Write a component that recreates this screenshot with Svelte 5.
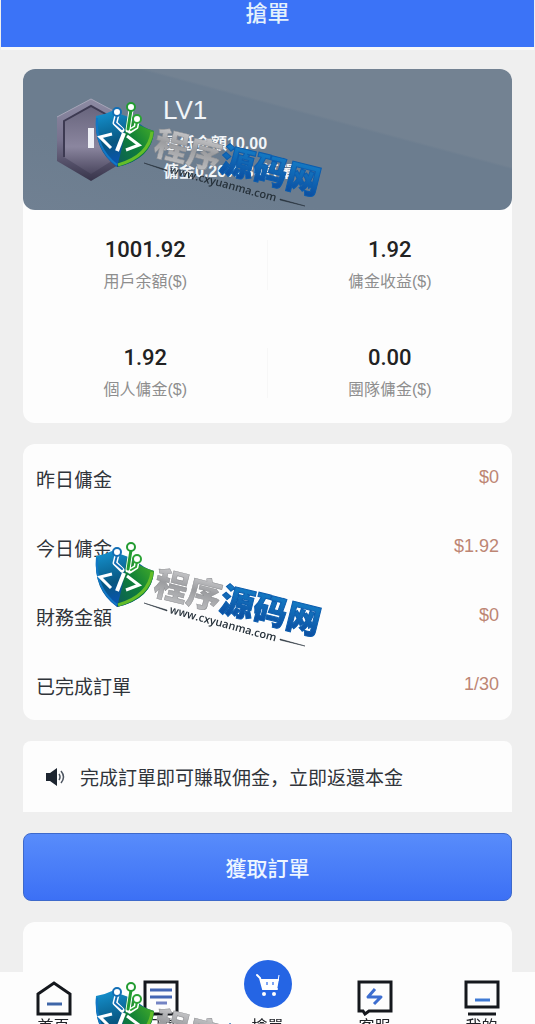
<script lang="ts">
  const stats = [
    { value: "1001.92", label: "用戶余額($)" },
    { value: "1.92", label: "傭金收益($)" },
    { value: "1.92", label: "個人傭金($)" },
    { value: "0.00", label: "團隊傭金($)" },
  ];

  const rows = [
    { label: "昨日傭金", value: "$0" },
    { label: "今日傭金", value: "$1.92" },
    { label: "財務金額", value: "$0" },
    { label: "已完成訂單", value: "1/30" },
  ];

  const tabs = [
    { icon: "home", label: "首頁" },
    { icon: "list", label: "記錄" },
    { icon: "cart", label: "搶單" },
    { icon: "chat", label: "客服" },
    { icon: "screen", label: "我的" },
  ];

  const marks = [0, 1, 2];
</script>

<div class="page">
  <header><h1>搶單</h1></header>

  <main>
    <section class="card">
      <div class="level">
        <svg class="medal" viewBox="0 0 70 84" aria-hidden="true">
          <defs>
            <linearGradient id="rim" x1="0" y1="0" x2="0" y2="1">
              <stop offset="0" stop-color="#8d8ba3" />
              <stop offset="0.5" stop-color="#77728e" />
              <stop offset="1" stop-color="#37344a" />
            </linearGradient>
            <linearGradient id="face" x1="0" y1="0" x2="0" y2="1">
              <stop offset="0" stop-color="#67647c" />
              <stop offset="0.6" stop-color="#8b869f" />
              <stop offset="1" stop-color="#4b475f" />
            </linearGradient>
          </defs>
          <path d="M35 1 L69 19 V63 L35 83 L1 63 V19Z" fill="url(#rim)" />
          <path d="M35 8 L62 23 V59 L35 76 L8 59 V23Z" fill="url(#face)" />
          <path d="M8 59 V23 L35 8 L62 23" fill="none" stroke="#3d3a52" stroke-width="2" />
          <path d="M1 19 L35 1 L69 19" fill="none" stroke="#a6a5b8" stroke-width="1" />
          <rect x="32" y="30" width="6" height="20" fill="#eef0f6" />
        </svg>
        <div class="level-text">
          <h2>LV1</h2>
          <p>最低金額10.00</p>
          <p>傭金0.20% 30訂單</p>
        </div>
      </div>
      <dl class="stats">
        {#each stats as s}
          <div class="stat">
            <dt>{s.label}</dt>
            <dd>{s.value}</dd>
          </div>
        {/each}
      </dl>
    </section>

    <dl class="card rows">
      {#each rows as r}
        <div class="row">
          <dt>{r.label}</dt>
          <dd>{r.value}</dd>
        </div>
      {/each}
    </dl>

    <div class="card notice">
      <svg width="20" height="20" viewBox="0 0 20 20" aria-hidden="true">
        <path d="M0 6 H4 L11 1 V19 L4 14 H0Z" fill="#1d2530" />
        <path d="M13 7 Q15 10 13 13 M15 4 Q20 10 15 16" fill="none" stroke="#4d5560" stroke-width="1.5" />
      </svg>
      <span>完成訂單即可賺取佣金，立即返還本金</span>
    </div>

    <button class="grab" type="button">獲取訂單</button>

    <section class="card more"></section>
  </main>

  <nav>
    {#each tabs as t}
      <a href="#{t.icon}" class:main-tab={t.icon === "cart"}>
        {#if t.icon === "cart"}
          <span class="bubble">
            <svg width="48" height="48" viewBox="0 0 48 48" aria-hidden="true">
              <circle cx="24" cy="24" r="24" fill="#2565e4" />
              <path d="M13 15 L16 18 L19 29 H33" fill="none" stroke="#fff" stroke-width="2" stroke-linecap="round" />
              <path d="M16 19 H35 L33 30 H19Z" fill="#fff" />
              <path d="M34 21 L35 15" stroke="#fff" stroke-width="1" />
              <path d="M23 22 V25 M29 22 V25" stroke="#7ea5f4" stroke-width="2" />
              <circle cx="20" cy="34" r="2" fill="#fff" />
              <circle cx="30" cy="34" r="2" fill="#fff" />
            </svg>
          </span>
        {:else}
          <svg width="36" height="36" viewBox="0 0 36 36" fill="none" stroke="#15181d" stroke-width="3" aria-hidden="true">
            {#if t.icon === "home"}
              <path d="M2 14 L18 3 L34 14 V34 H2Z" />
              <path d="M11 24 H26" stroke="#3f66a8" />
            {:else if t.icon === "list"}
              <path d="M2 2 H34 V34 H2Z" />
              <path d="M7 10 H29 M7 17 H29" stroke="#4567b4" />
              <path d="M13 23 H24" stroke="#7484c4" />
            {:else if t.icon === "chat"}
              <path d="M2 2 H34 V31 H12 L8 34 L6 31 H2Z" />
              <path d="M18 9 L11 17 H24 L17 24" stroke="#3d6ed0" stroke-linejoin="round" />
            {:else}
              <path d="M2 2 H34 V27 H2Z" />
              <path d="M4 34 H32" />
              <path d="M11 20 H26" stroke="#3f7ad4" />
            {/if}
          </svg>
        {/if}
        <span class="tab-label">{t.label}</span>
      </a>
    {/each}
  </nav>

  <div class="marks" aria-hidden="true">
    {#each marks as m}
      <svg width="240" height="120" viewBox="0 0 240 120">
        <defs>
          <linearGradient id="blue{m}" x1="0" y1="0" x2="0.3" y2="1">
            <stop offset="0" stop-color="#1695d4" />
            <stop offset="0.6" stop-color="#075680" />
            <stop offset="1" stop-color="#0a55b8" />
          </linearGradient>
          <linearGradient id="green{m}" x1="1" y1="0" x2="0" y2="1">
            <stop offset="0" stop-color="#4fb524" />
            <stop offset="0.5" stop-color="#0f8038" />
            <stop offset="1" stop-color="#0b5a5a" />
          </linearGradient>
          <linearGradient id="grey{m}" x1="0" y1="0" x2="0" y2="1">
            <stop offset="0" stop-color="#e2e2e4" />
            <stop offset="0.5" stop-color="#9c9da0" />
            <stop offset="1" stop-color="#c6c7c9" />
          </linearGradient>
          <linearGradient id="name{m}" x1="0" y1="0" x2="0" y2="1">
            <stop offset="0" stop-color="#1789cf" />
            <stop offset="1" stop-color="#0a459a" />
          </linearGradient>
        </defs>

        <path d="M6 20 Q14 19 22 15 L44 23 Q53 32 64 35 Q62 63 27 71 Q3 54 6 20Z" fill="url(#blue{m})" />
        <path d="M37 22 Q53 32 64 35 Q62 63 27 71 L32 52Z" fill="url(#green{m})" />
        <path d="M62 36 Q59 60 28 69" fill="none" stroke="#64bd29" stroke-width="3" />
        <path d="M7 22 Q5 53 27 69" fill="none" stroke="#1277c5" stroke-width="2" />

        <g fill="none" stroke-linecap="round" stroke-linejoin="round">
          <path d="M27 19 L25 27 L32 34 M41 14 L38 34 M47 26 L46 31 L40 35" stroke="#fff" stroke-width="5" />
          <path d="M27 19 L25 27 L32 33" stroke="#126eb5" stroke-width="2" />
          <path d="M41 14 L38 33" stroke="#229b31" stroke-width="3" />
          <path d="M47 26 L46 31 L41 34" stroke="#2ba334" stroke-width="2" />
          <circle cx="27" cy="16" r="4" fill="#fff" stroke="#126eb5" stroke-width="2" />
          <circle cx="41" cy="11" r="4" fill="#fff" stroke="#229b31" stroke-width="2" />
          <circle cx="47" cy="23" r="4" fill="#fff" stroke="#2ba334" stroke-width="2" />
        </g>
        <g fill="none" stroke="#fff" stroke-width="3">
          <path d="M22 38 L10 41 L21 52" />
          <path d="M34 37 L27 55" stroke-width="4" />
          <path d="M37 40 L49 49 L36 54" />
        </g>

        <g transform="translate(62 58) rotate(14)">
          <text class="mark-name" x="0" y="0" fill="url(#grey{m})" stroke="#8c8d90" stroke-width="0.5">程序</text>
          <text class="mark-name" x="68" y="0" fill="url(#name{m})" stroke="#0c5dae" stroke-width="1">源码网</text>
        </g>
        <g transform="translate(79 77) rotate(15)">
          <text class="mark-url" x="0" y="0">www.cxyuanma.com</text>
        </g>
        <path d="M54 67 L77 74 L77 75Z M190 103 L215 110 L190 104Z" fill="#26313a" stroke="#26313a" stroke-width="0.5" />
      </svg>
    {/each}
  </div>
</div>

<style>
  :global(body) {
    background: #efefef;
  }

  .page {
    position: relative;
    height: 100vh;
    overflow: hidden;
    font-family: "Liberation Sans", "Noto Sans CJK TC", sans-serif;
    color: #30343a;
  }

  h1,
  h2,
  p,
  dl,
  dd {
    margin: 0;
  }

  header {
    height: 47px;
    margin: 0 1px;
    background: #3b73f7;
    border-bottom: 3px solid #f8f8f8;
  }

  h1 {
    color: #e4f1fc;
    font-size: 22px;
    font-weight: 500;
    line-height: 28px;
    text-align: center;
  }

  main {
    display: flex;
    flex-direction: column;
    gap: 21px;
    padding: 19px 23px 0;
  }

  .card {
    background: #fdfdfd;
    border-radius: 12px;
  }

  .level {
    display: flex;
    align-items: center;
    gap: 37px;
    height: 141px;
    padding-left: 33px;
    border-radius: 12px;
    background: linear-gradient(195deg, #738292 0 36%, #6c7d8f 37% 70%, #708092 100%);
    box-sizing: border-box;
    color: #f2f5f8;
  }

  .medal {
    width: 70px;
    height: 84px;
  }

  h2 {
    margin-bottom: 4px;
    font-size: 26px;
    font-weight: 400;
    line-height: 32px;
  }

  .level p {
    font-size: 16px;
    font-weight: 700;
    line-height: 28px;
  }

  .stats {
    display: grid;
    grid-template-columns: 1fr 1fr;
    row-gap: 8px;
    padding-bottom: 5px;
  }

  .stat {
    display: flex;
    flex-direction: column-reverse;
    justify-content: flex-end;
    height: 76px;
    padding-top: 24px;
    text-align: center;
    background: linear-gradient(#f7f7f7, #f7f7f7) right 30px / 1px 50px no-repeat;
  }

  .stat:nth-child(even) {
    background: none;
  }

  .stat dt {
    color: #8e8e8e;
    font-size: 16px;
    line-height: 32px;
  }

  .stat dd {
    color: #222;
    font-family: Roboto, sans-serif;
    font-size: 22px;
    font-weight: 500;
    line-height: 32px;
  }

  .row {
    display: flex;
    align-items: center;
    justify-content: space-between;
    height: 69px;
    padding: 0 13px;
    font-size: 19px;
  }

  .row dd {
    color: #bd8674;
    font-size: 18px;
    padding-bottom: 2px;
  }

  .notice {
    display: flex;
    align-items: center;
    gap: 14px;
    height: 71px;
    padding-left: 23px;
    border-radius: 8px 8px 0 0;
    font-family: "Noto Sans CJK SC", sans-serif;
    font-size: 19px;
    white-space: nowrap;
  }

  .grab {
    height: 68px;
    border: 1px solid #3d69cb;
    border-radius: 8px;
    background: linear-gradient(#588cfb, #3c70f5);
    color: #eef6ff;
    font-family: inherit;
    font-size: 21px;
    font-weight: 500;
    cursor: pointer;
  }

  .more {
    height: 120px;
  }

  nav {
    position: fixed;
    right: 0;
    bottom: 0;
    left: 0;
    display: flex;
    height: 52px;
    background: #fdfdfd;
  }

  nav a {
    flex: 1;
    display: flex;
    flex-direction: column;
    align-items: center;
    gap: 1px;
    height: 70px;
    padding-top: 8px;
    box-sizing: border-box;
    color: #202328;
    text-decoration: none;
  }

  nav svg {
    flex: none;
    display: block;
  }

  nav .main-tab {
    margin-top: -20px;
    height: 90px;
    padding-top: 0;
  }

  .bubble {
    padding: 8px;
    border-radius: 50%;
    background: #fdfdfd;
  }

  .tab-label {
    font-size: 16px;
    line-height: 20px;
  }

  /* diagonal brand overlay, repeated down the page */
  .marks {
    position: fixed;
    inset: 0;
    display: flex;
    flex-direction: column;
    gap: 320px;
    padding: 96px 0 0 90px;
    overflow: hidden;
    pointer-events: none;
  }

  .marks svg {
    flex: none;
    overflow: visible;
  }

  .mark-name {
    font-family: "Noto Sans CJK SC", sans-serif;
    font-size: 34px;
    font-weight: 900;
  }

  .mark-url {
    fill: #26313a;
    font-family: "Open Sans", sans-serif;
    font-size: 11px;
    font-weight: 600;
  }
</style>
